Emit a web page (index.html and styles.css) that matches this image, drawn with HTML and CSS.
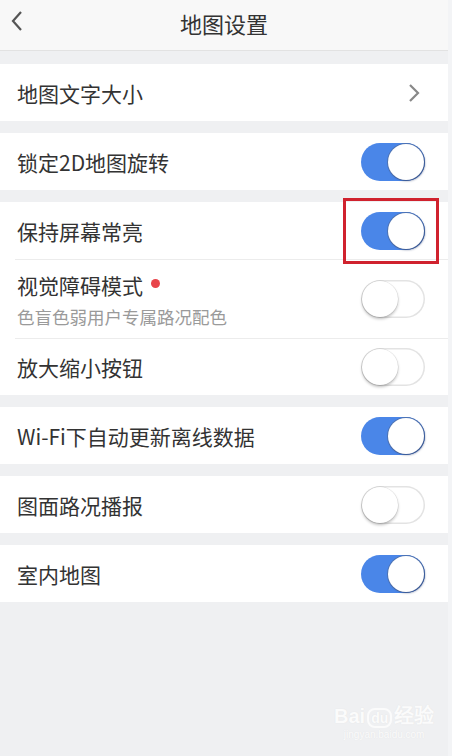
FILE: index.html
```html
<!DOCTYPE html>
<html lang="zh-CN">

<head>
    <meta charset="UTF-8">
    <meta name="viewport" content="width=device-width, initial-scale=1.0">
    <title>地图设置</title>
    <link rel="stylesheet" href="styles.css">
</head>

<body>
    <div class="page">
        <!-- Top bar -->
        <header class="topbar">
            <svg class="back" width="14" height="22" viewBox="0 0 14 22">
                <path d="M11 2 L3 11 L11 20" fill="none" stroke="#555" stroke-width="2.2" />
            </svg>
            <h1>地图设置</h1>
        </header>

        <section class="group">
            <div class="row">
                <span class="label">地图文字大小</span>
                <svg class="arrow" width="12" height="20" viewBox="0 0 12 20">
                    <path d="M2 2 L10 10 L2 18" fill="none" stroke="#888" stroke-width="2.2" />
                </svg>
            </div>
        </section>

        <section class="group">
            <div class="row">
                <span class="label">锁定2D地图旋转</span>
                <span class="switch on"><span class="knob"></span></span>
            </div>
        </section>

        <section class="group">
            <div class="row">
                <span class="label">保持屏幕常亮</span>
                <span class="switch on marked"><span class="knob"></span></span>
            </div>
            <div class="row tall">
                <div class="text">
                    <span class="label">视觉障碍模式<i class="dot"></i></span>
                    <span class="sub">色盲色弱用户专属路况配色</span>
                </div>
                <span class="switch"><span class="knob"></span></span>
            </div>
            <div class="row">
                <span class="label">放大缩小按钮</span>
                <span class="switch"><span class="knob"></span></span>
            </div>
        </section>

        <section class="group">
            <div class="row">
                <span class="label">Wi-Fi下自动更新离线数据</span>
                <span class="switch on"><span class="knob"></span></span>
            </div>
        </section>

        <section class="group">
            <div class="row">
                <span class="label">图面路况播报</span>
                <span class="switch"><span class="knob"></span></span>
            </div>
        </section>

        <section class="group">
            <div class="row">
                <span class="label">室内地图</span>
                <span class="switch on"><span class="knob"></span></span>
            </div>
        </section>

        <!-- watermark -->
        <div class="watermark">
            <span class="wm-main">Bai<b>du</b>经验</span>
            <span class="wm-sub">jingyan.baidu.com</span>
        </div>
    </div>
</body>

</html>
```

FILE: styles.css
```css
body {
    margin: 0;
    padding: 0;
    background-color: #f3f4f6;
    font-family: "Noto Sans CJK SC", "Noto Sans", sans-serif;
    color: #333;
}

.page {
    position: relative;
    width: 448px;
    min-height: 756px;
    background-color: #eff0f2;
}

.topbar {
    height: 51px;
    box-sizing: border-box;
    padding-bottom: 5px;
    background-color: #f8f8f8;
    border-bottom: 1px solid #e2e2e2;
    display: flex;
    align-items: center;
    justify-content: center;
    position: relative;
}

.topbar h1 {
    margin: 0;
    font-size: 22px;
    font-weight: normal;
    color: #333;
}

.back {
    position: absolute;
    left: 10px;
    top: 10px;
}

.group {
    background-color: #fff;
    margin-top: 12px;
}

.topbar + .group {
    margin-top: 13px;
}

.row {
    height: 56px;
    margin-left: 15px;
    padding-right: 23px;
    display: flex;
    align-items: center;
    justify-content: space-between;
    border-top: 1px solid #ececec;
}

.row:first-child {
    border-top: none;
    height: 57px;
}

.row.tall {
    height: 78px;
}

.label {
    font-size: 21px;
    padding-left: 2px;
    display: flex;
    align-items: center;
}

.text {
    display: flex;
    flex-direction: column;
    gap: 4px;
}

.sub {
    font-size: 17.5px;
    color: #9a9a9a;
    padding-left: 2px;
}

.dot {
    width: 9px;
    height: 9px;
    border-radius: 50%;
    background-color: #e8444a;
    margin-left: 8px;
    margin-top: -2px;
}

.arrow {
    margin-right: 5px;
}

.switch {
    position: relative;
    width: 64px;
    height: 38px;
    border-radius: 19px;
    background-color: #fff;
    box-shadow: inset 0 0 0 1.5px #e3e3e3;
    box-sizing: border-box;
}

.switch .knob {
    position: absolute;
    left: 1px;
    top: 1px;
    width: 36px;
    height: 36px;
    border-radius: 50%;
    background-color: #fff;
    box-shadow: 0 2px 3px rgba(0, 0, 0, 0.25), 0 0 0 0.5px rgba(0, 0, 0, 0.12);
}

.switch.on {
    background-color: #4a86e8;
    box-shadow: none;
}

.switch.on .knob {
    left: auto;
    right: 1px;
    box-shadow: 1px 1px 2px rgba(40, 60, 110, 0.6), 0 0 0 1px #4f75b5;
}

.switch.marked::after {
    content: "";
    position: absolute;
    left: -18px;
    top: -14px;
    width: 90px;
    height: 60px;
    border: 3px solid #d0222e;
}

.watermark {
    position: absolute;
    left: 334px;
    top: 700px;
    display: flex;
    flex-direction: column;
    align-items: center;
    color: #fff;
    opacity: 0.75;
}

.wm-main {
    font-family: "Liberation Sans", sans-serif;
    font-size: 20px;
    font-weight: bold;
    text-shadow: 0 0 1px #dcdcdc;
}

.wm-main b {
    font-size: 14px;
    border: 2px solid #fff;
    border-radius: 8px;
    padding: 0 2px;
    margin: 0 2px;
}

.wm-sub {
    font-family: "Liberation Sans", sans-serif;
    font-size: 10px;
    text-shadow: 0 0 1px #dcdcdc;
}
```
